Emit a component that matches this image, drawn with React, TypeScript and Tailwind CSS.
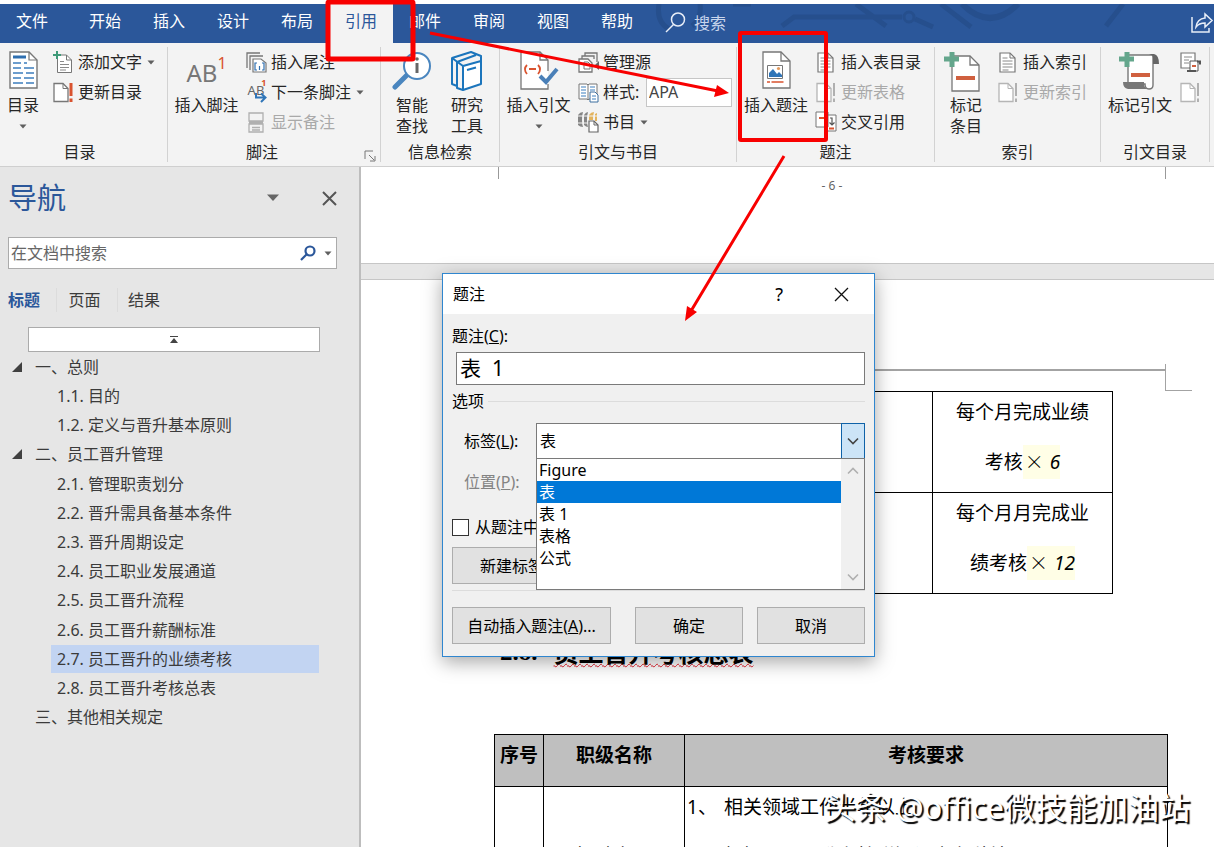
import React, { ReactNode } from "react";

const TABS = ["开始", "插入", "设计", "布局", "引用", "邮件", "审阅", "视图", "帮助"];

const Caret = ({ className = "" }: { className?: string }) => (
  <svg width="8" height="5" viewBox="0 0 8 5" className={className} aria-hidden="true">
    <path d="M0.5 0.5h7L4 4.5z" fill="#5f5f5f" />
  </svg>
);

/* ---------- ribbon icons ---------- */

const TocIcon = () => (
  <svg width="29" height="38" viewBox="0 0 29 38">
    <path d="M1 1h19l8 8v28H1z" fill="#fff" stroke="#777" strokeWidth="1.4" />
    <path d="M20 1v8h8" fill="none" stroke="#777" strokeWidth="1.2" />
    <path d="M4 6h13" stroke="#2f6fb0" strokeWidth="3" />
    <path d="M4 12h8M15 12h3M4 17h8M15 17h10M4 22h10M17 22h8M4 27h8M15 27h10M4 32h10M17 32h8" stroke="#3d7ebd" strokeWidth="1.6" />
  </svg>
);

const AddTextIcon = () => (
  <svg width="20" height="22" viewBox="0 0 20 22">
    <path d="M4.500 4h9l5 5v12.500h-14z" fill="#fff" stroke="#777" />
    <path d="M13.500 4v5h5" fill="none" stroke="#777" />
    <path d="M7 10.500h4M7 13.500h9M7 16.500h9M7 19h6" stroke="#8a8a8a" />
    <path d="M4 0v8M0 4h8" stroke="#3f9a78" strokeWidth="2" />
  </svg>
);

const UpdateIcon = ({ muted = false }: { muted?: boolean }) => (
  <svg width="21" height="21" viewBox="0 0 21 21">
    <path d="M1 1.500h9l5 5v13H1z" fill="#fff" stroke={muted ? "#b5b5b5" : "#777"} strokeWidth="1.3" />
    <path d="M10 1.500v5h5" fill="none" stroke={muted ? "#b5b5b5" : "#777"} />
    <path d="M18 1v13M18 16.500v3.500" stroke={muted ? "#b0b0b0" : "#d9532f"} strokeWidth={muted ? 2 : 3} />
  </svg>
);

const EndnoteIcon = () => (
  <svg width="21" height="21" viewBox="0 0 21 21">
    <path d="M1 16V1h13M4 18V4h13" fill="none" stroke="#777" strokeWidth="1.300" />
    <path d="M7 20V7h8l5 4v9z" fill="#fff" stroke="#777" strokeWidth="1.200" />
    <path d="M11 11H9v7h2M16 11h2v7h-2M13.500 14v4" fill="none" stroke="#2f6fb0" strokeWidth="1.200" />
  </svg>
);

const NextNoteIcon = () => (
  <span className="relative block h-[22px] w-[21px] text-[13px] leading-[18px] text-[#666]">
    AB
    <span className="absolute -top-1 right-0 text-[9px] leading-[12px] font-bold text-[#d9532f]">1</span>
    <svg width="12" height="11" viewBox="0 0 12 11" className="absolute right-0 bottom-0">
      <path d="M1 1v4.500h8M6 1.500l4.500 4L6 10" fill="none" stroke="#2f75b8" strokeWidth="2" />
    </svg>
  </span>
);

const ShowNotesIcon = () => (
  <svg width="21" height="21" viewBox="0 0 21 21">
    <path d="M3 9V1h14v8zM3 12h14v8H3zM6 15.500h8M6 18h8M3 10.500h14" fill="none" stroke="#b0b0b0" strokeWidth="1.300" />
  </svg>
);

const SmartLookupIcon = () => (
  <svg width="40" height="40" viewBox="0 0 40 40">
    <path d="M15 24L3 36" stroke="#4a86bf" strokeWidth="5" strokeLinecap="round" />
    <circle cx="25" cy="15" r="13" fill="#fff" stroke="#4a86bf" strokeWidth="2" />
    <path d="M25 12v10" stroke="#666" strokeWidth="3" />
    <circle cx="25" cy="8" r="1.800" fill="#666" />
  </svg>
);

const ResearchIcon = () => (
  <svg width="32" height="40" viewBox="0 0 32 40" fill="none" stroke="#1b75bc" strokeWidth="2" strokeLinejoin="round">
    <path d="M12 15l18-5v23l-18 6z" fill="#fff" />
    <path d="M12 15L1 7v26l5 2M1 7l19-6 10 4v5M12 39l-6-2V11l19-7" />
    <path d="M16 19l9-2.500" />
  </svg>
);

const CitationIcon = () => (
  <svg width="40" height="40" viewBox="0 0 40 40">
    <path d="M29 20V9l-8-8H2v37h27v-5" fill="#fff" stroke="#777" strokeWidth="1.300" />
    <path d="M21 1v8h8" fill="none" stroke="#777" strokeWidth="1.300" />
    <path d="M8 14c-2.500 2.500-2.500 6 0 9M19 14c2.500 2.500 2.500 6 0 9M10 18h7" fill="none" stroke="#d9532f" strokeWidth="1.800" />
    <path d="M21 25l6 6 11-13" fill="none" stroke="#4a80b8" strokeWidth="4" />
  </svg>
);

const ManageSourcesIcon = () => (
  <svg width="21" height="21" viewBox="0 0 21 21">
    <path d="M7 4V1h12v9M4 7V4h12v3" fill="none" stroke="#777" strokeWidth="1.300" />
    <path d="M1 7h9l4 4v9H1z" fill="#fff" stroke="#777" strokeWidth="1.300" />
    <path d="M6 10h4l2 2v5H6z" fill="#fff" stroke="#777" />
    <path d="M21 9v9l-5-4z" fill="#666" />
  </svg>
);

const StyleIcon = () => (
  <svg width="21" height="21" viewBox="0 0 21 21">
    <path d="M1 2h8l1 1 1-1h8v15h-8l-1 1-1-1H1zM10 3v14" fill="#fff" stroke="#777" />
    <path d="M3 5h5M3 8h5M3 11h5M3 14h5M12 5h5M12 8h5" stroke="#3d7ebd" strokeWidth="1.200" />
    <path d="M12 10h5l3 3v7h-8z" fill="#fff" stroke="#3d6f9f" />
    <path d="M14 14h4M14 17h4" stroke="#3d7ebd" />
  </svg>
);

const BibliographyIcon = () => (
  <svg width="22" height="22" viewBox="0 0 22 22">
    <path d="M1 4q2-3 5-3-1 3-1 8t1 7q-3 0-5-2zM7 4q2-3 4-3-1 3-1 8t1 7q-2 0-4-2z" fill="#858585" />
    <path d="M12 4q2-3 5-3-1 3-1 8h-4z" fill="#e3b35d" />
    <path d="M18 3l2-1v8h-2z" fill="#e3b35d" />
    <path d="M0 5h20M0 12h11" stroke="#f3f3f3" />
    <path d="M12 10h5l4 4v7h-9z" fill="#fff" stroke="#666" strokeWidth="1.200" />
    <path d="M17 10v4h4" fill="none" stroke="#666" />
  </svg>
);

const CaptionIcon = () => (
  <svg width="29" height="38" viewBox="0 0 29 38">
    <path d="M1 1h18l9 9v27H1z" fill="#fff" stroke="#777" strokeWidth="1.300" />
    <path d="M19 1v9h9" fill="none" stroke="#777" strokeWidth="1.300" />
    <path d="M5.500 14.500h15v13h-15z" fill="#fff" stroke="#777" />
    <path d="M7 26v-4l4-4 4 5 2-2 3 3v2z" fill="#2f75b8" />
    <circle cx="16.500" cy="17.500" r="1.600" fill="#e39a5d" />
    <path d="M5 31h3M9.500 31h12" stroke="#d9532f" strokeWidth="1.600" />
  </svg>
);

const ListPageIcon = () => (
  <svg width="20" height="21" viewBox="0 0 20 21">
    <path d="M2 1h10l5 5v14H2z" fill="#fff" stroke="#777" strokeWidth="1.200" />
    <path d="M12 1v5h5" fill="none" stroke="#777" />
    <path d="M4.500 6h5M4.500 9h10M4.500 12h10M4.500 15h10M4.500 18h6" stroke="#8a8a8a" />
  </svg>
);

const CrossRefIcon = () => (
  <svg width="22" height="22" viewBox="0 0 22 22">
    <path d="M1 1h12v15H1zM12 4h9v16h-9z" fill="#fff" stroke="#777" />
    <path d="M4 7h8M14 17.500h5" stroke="#d9532f" strokeWidth="2" />
    <path d="M15 7h2v7M14.500 11.500l2.500 2.500 2.500-2.500" fill="none" stroke="#555" strokeWidth="1.200" />
  </svg>
);

const MarkEntryIcon = () => (
  <svg width="44" height="42" viewBox="0 0 44 42">
    <path d="M8 5h18l9 9v26H8z" fill="#fff" stroke="#777" strokeWidth="1.300" />
    <path d="M26 5v9h9" fill="none" stroke="#777" strokeWidth="1.300" />
    <path d="M12 27h19" stroke="#d0603f" strokeWidth="4" />
    <path d="M8 1v15M0 8h15" stroke="#64a68c" strokeWidth="5" />
  </svg>
);

const MarkCitationIcon = () => (
  <svg width="42" height="42" viewBox="0 0 42 42">
    <path d="M9 4h25v30q0 4-4 4t-4-5H9z" fill="#fff" stroke="#777" strokeWidth="1.400" />
    <path d="M30 3h5q5 1 5 10h-6V7q0-3-4-4z" fill="#666" />
    <path d="M4 31h21v3q1 4 5 4H9q-5-1-5-7z" fill="#777" />
    <path d="M12 24h19" stroke="#d0603f" strokeWidth="4" />
    <path d="M8 1v15M0 8h15" stroke="#64a68c" strokeWidth="5" />
  </svg>
);

const AuthoritiesIcon = () => (
  <svg width="21" height="21" viewBox="0 0 21 21">
    <path d="M1 1h14v15H1z" fill="#fff" stroke="#777" strokeWidth="1.200" />
    <path d="M4 5h8M4 8h5M4 11h5" stroke="#8a8a8a" />
    <path d="M10 9h8v10h-8z" fill="#fff" stroke="#555" />
    <path d="M7 19h9M17 9.500h3v3" fill="none" stroke="#555" strokeWidth="2" />
    <path d="M12 14h4" stroke="#d0603f" strokeWidth="2" />
  </svg>
);

/* ---------- ribbon building blocks ---------- */

function BigButton({ icon, lines, caret, width }: { icon: ReactNode; lines: string[]; caret?: boolean; width: string }) {
  return (
    <button className={`flex shrink-0 flex-col items-center pt-1 ${width}`}>
      <span className="flex h-11 items-start justify-center">{icon}</span>
      {lines.map((l) => (
        <span key={l} className="h-[21px] leading-[21px] whitespace-nowrap">
          {l}
        </span>
      ))}
      {caret && <Caret className="mt-2" />}
    </button>
  );
}

function SmallButton({ icon, text, caret, muted }: { icon: ReactNode; text?: string; caret?: boolean; muted?: boolean }) {
  return (
    <button
      aria-label={text ?? "引文目录选项"}
      className={`flex h-[30px] items-center gap-1 whitespace-nowrap ${muted ? "text-[#a9a9a9]" : ""}`}
    >
      <span className="flex w-[22px] shrink-0 justify-center">{icon}</span>
      {text}
      {caret && <Caret className="ml-px" />}
    </button>
  );
}

function Group({
  label,
  width,
  children,
  launcher,
  labelPadding = "",
}: {
  label: string;
  width: string;
  children: ReactNode;
  launcher?: boolean;
  labelPadding?: string;
}) {
  return (
    <section className={`relative my-1 flex shrink-0 flex-col border-r border-[#d2d2d2] ${width}`}>
      <div className="flex min-h-0 flex-1 items-start">{children}</div>
      <div className={`h-5 text-center leading-5 ${labelPadding}`}>{label}</div>
      {launcher && (
        <button aria-label={`${label}选项`} className="absolute right-1 bottom-0">
          <svg width="12" height="12" viewBox="0 0 12 12" fill="none" stroke="#777">
            <path d="M1 9V1h8M5 5l5 5M11 6v5H6" />
          </svg>
        </button>
      )}
    </section>
  );
}

const Ribbon = () => (
  <div className="flex h-[124px] shrink-0 overflow-hidden border-b border-[#cfcfcf] bg-[#f3f3f3] text-[#262626]">
    <Group label="目录" width="w-[168px]" labelPadding="pr-2">
      <BigButton width="w-[46px]" icon={<TocIcon />} lines={["目录"]} caret />
      <div className="ml-[6px] flex flex-col">
        <SmallButton icon={<AddTextIcon />} text="添加文字" caret />
        <SmallButton icon={<UpdateIcon />} text="更新目录" />
      </div>
    </Group>
    <Group label="脚注" width="w-[213px]" launcher labelPadding="pr-6">
      <BigButton
        width="w-[77px]"
        icon={
          <span className="flex pt-1 text-2xl leading-9 text-[#777]">
            AB<span className="text-base leading-4 text-[#d9532f]">1</span>
          </span>
        }
        lines={["插入脚注"]}
      />
      <div className="flex flex-col">
        <SmallButton icon={<EndnoteIcon />} text="插入尾注" />
        <SmallButton icon={<NextNoteIcon />} text="下一条脚注" caret />
        <SmallButton icon={<ShowNotesIcon />} text="显示备注" muted />
      </div>
    </Group>
    <Group label="信息检索" width="w-[119px]">
      <BigButton width="w-[62px]" icon={<SmartLookupIcon />} lines={["智能", "查找"]} />
      <BigButton width="w-12" icon={<ResearchIcon />} lines={["研究", "工具"]} />
    </Group>
    <Group label="引文与书目" width="w-[237px]">
      <BigButton width="w-[77px]" icon={<CitationIcon />} lines={["插入引文"]} caret />
      <div className="flex flex-col">
        <SmallButton icon={<ManageSourcesIcon />} text="管理源" />
        <div className="flex h-[30px] items-center gap-1">
          <span className="flex w-[22px] justify-center">
            <StyleIcon />
          </span>
          <label htmlFor="citation-style" className="w-[39px]">
            样式:
          </label>
          <select
            id="citation-style"
            className="h-[29px] w-[86px] appearance-none border border-[#c6c6c6] bg-white px-[2px] text-[#444]"
          >
            <option>APA</option>
          </select>
        </div>
        <SmallButton icon={<BibliographyIcon />} text="书目" caret />
      </div>
    </Group>
    <Group label="题注" width="w-[198px]">
      <BigButton width="w-[78px]" icon={<CaptionIcon />} lines={["插入题注"]} />
      <div className="flex flex-col">
        <SmallButton icon={<ListPageIcon />} text="插入表目录" />
        <SmallButton icon={<UpdateIcon muted />} text="更新表格" muted />
        <SmallButton icon={<CrossRefIcon />} text="交叉引用" />
      </div>
    </Group>
    <Group label="索引" width="w-[166px]">
      <BigButton width="w-[62px]" icon={<MarkEntryIcon />} lines={["标记", "条目"]} />
      <div className="flex flex-col">
        <SmallButton icon={<ListPageIcon />} text="插入索引" />
        <SmallButton icon={<UpdateIcon muted />} text="更新索引" muted />
      </div>
    </Group>
    <Group label="引文目录" width="w-[109px]">
      <BigButton width="w-[78px]" icon={<MarkCitationIcon />} lines={["标记引文"]} />
      <div className="flex flex-col">
        <SmallButton icon={<AuthoritiesIcon />} />
        <SmallButton icon={<UpdateIcon muted />} />
      </div>
    </Group>
  </div>
);

const TitleBar = () => (
  <header className="relative flex h-[39px] shrink-0 items-stretch bg-[#2b579a] text-white">
    <svg className="absolute top-0 right-0" width="574" height="39" viewBox="0 0 574 39" fill="none" stroke="#264f8d" strokeWidth="5" aria-hidden="true">
      <path d="M19 0q-3 18 10 25M60 0q2 14-8 22" />
      <path d="M93 0h18" />
      <path d="M142 22l12-9h108M216 0l30 22M275 15l18 8M301 0l30 23" />
      <circle cx="269" cy="13" r="5" strokeWidth="3" />
      <path d="M322 0q28 28 56 0" strokeWidth="6" />
      <path d="M483 0l-17 22" />
    </svg>
    <nav className="relative flex">
      <button className="mr-[9px] w-16 pb-[5px]">文件</button>
      {TABS.map((t) => (
        <button key={t} className={`w-16 pb-[5px] ${t === "引用" ? "bg-[#f3f3f3] text-[#2b579a]" : ""}`}>
          {t}
        </button>
      ))}
    </nav>
    <label className="relative ml-4 flex flex-1 items-center gap-2 pb-[2px]">
      <svg width="21" height="21" viewBox="0 0 21 21" fill="none" stroke="#e8eef8" strokeWidth="1.500">
        <circle cx="13" cy="7.500" r="6.500" />
        <path d="M8.500 12.500L1 20" />
      </svg>
      <input placeholder="搜索" className="w-40 bg-transparent placeholder-[#c9d6ec] outline-none" />
    </label>
    <button aria-label="共享" className="relative pb-[2px]">
      <svg width="23" height="22" viewBox="0 0 23 22" fill="none" stroke="#e8eef8" strokeWidth="1.500">
        <path d="M1 5v15h17v-4M5 15q1-8 9-9V2l7 6.500-7 6.500v-4q-6 0-9 4z" />
      </svg>
    </button>
  </header>
);

/* ---------- navigation pane ---------- */

const OUTLINE: { text: string; level: number; open?: boolean; current?: boolean }[] = [
  { text: "一、总则", level: 1, open: true },
  { text: "1.1. 目的", level: 2 },
  { text: "1.2. 定义与晋升基本原则", level: 2 },
  { text: "二、员工晋升管理", level: 1, open: true },
  { text: "2.1. 管理职责划分", level: 2 },
  { text: "2.2. 晋升需具备基本条件", level: 2 },
  { text: "2.3. 晋升周期设定", level: 2 },
  { text: "2.4. 员工职业发展通道", level: 2 },
  { text: "2.5. 员工晋升流程", level: 2 },
  { text: "2.6. 员工晋升薪酬标准", level: 2 },
  { text: "2.7. 员工晋升的业绩考核", level: 2, current: true },
  { text: "2.8. 员工晋升考核总表", level: 2 },
  { text: "三、其他相关规定", level: 1 },
];

const NavigationPane = () => (
  <aside className="w-[361px] shrink-0 border-r-2 border-[#bdbdbd] bg-[#e6e6e6] text-[#3b3b3b]">
    <div className="mb-2 flex h-[62px] items-center pr-[22px] pl-2">
      <h2 className="flex-1 text-[29px] leading-10 text-[#2b579a]">导航</h2>
      <button aria-label="窗格选项" className="mr-[42px]">
        <svg width="14" height="8" viewBox="0 0 14 8">
          <path d="M1 0.500h12L7 7z" fill="#666" />
        </svg>
      </button>
      <button aria-label="关闭">
        <svg width="15" height="15" viewBox="0 0 15 15" stroke="#555" strokeWidth="2">
          <path d="M1 1l13 13M14 1L1 14" />
        </svg>
      </button>
    </div>
    <div className="mr-[22px] ml-2 flex h-8 items-center border border-[#ababab] bg-white pr-1">
      <input aria-label="在文档中搜索" placeholder="在文档中搜索" className="h-full min-w-0 flex-1 pl-[2px] placeholder-[#666] outline-none" />
      <svg width="16" height="16" viewBox="0 0 16 16" fill="none" stroke="#2b579a" strokeWidth="2.200" className="mr-2">
        <circle cx="10" cy="6" r="4.500" />
        <path d="M6.500 9.500L1 15" />
      </svg>
      <Caret />
    </div>
    <div className="mt-[19px] flex h-6 pl-2 leading-6">
      <button className="w-[49px] border-r border-[#dcdcdc] pr-4 font-bold whitespace-nowrap text-[#2b579a]">标题</button>
      <button className="ml-[11px] w-[50px] border-r border-[#dcdcdc] pr-4 whitespace-nowrap">页面</button>
      <button className="ml-[10px] whitespace-nowrap">结果</button>
    </div>
    <button aria-label="跳转到文档开头" className="mt-[15px] ml-7 flex h-[25px] w-[292px] items-center justify-center border border-[#ababab] bg-white">
      <svg width="8" height="7" viewBox="0 0 8 7" fill="#444">
        <path d="M0 0h8v1H0zM4 2l4 5H0z" />
      </svg>
    </button>
    <ul className="grid h-[380px] auto-rows-fr">
      {OUTLINE.map((o) => (
        <li key={o.text} className="flex items-center">
          <span className="flex w-[34px] shrink-0 justify-center">
            {o.open && (
              <svg width="10" height="10" viewBox="0 0 10 10">
                <path d="M10 0v10H0z" fill="#404040" />
              </svg>
            )}
          </span>
          <button
            className={`h-7 text-left whitespace-nowrap ${o.level === 2 ? "ml-[17px] w-[268px] pl-[6px]" : "pl-px"} ${
              o.current ? "bg-[#c2d4f2]" : ""
            }`}
          >
            {o.text}
          </button>
        </li>
      ))}
    </ul>
  </aside>
);

/* ---------- document ---------- */

const Line = ({ children }: { children?: ReactNode }) => <span className="block h-[49px] leading-10 whitespace-nowrap">{children}</span>;

const Times = ({ n }: { n: string }) => (
  <span className="bg-[#fffee6] py-1">
    <span className="pl-[2px] font-['Noto_Sans_CJK_SC',sans-serif] font-light">×</span>
    <i className="pl-[6px]">{n}</i>
  </span>
);

const DocumentView = () => (
  <main className="flex min-w-0 flex-1 flex-col overflow-hidden bg-[#e6e6e6] text-black">
    <div className="flex h-24 shrink-0 justify-between bg-white pl-[137px] text-[#666]">
      <span className="h-3 w-px bg-[#999]" />
      <span className="pt-[10px] text-xs leading-[18px]">- 6 -</span>
      <span className="mr-12 h-3 w-px bg-[#999]" />
    </div>
    <div className="h-[17px] shrink-0 border-y border-[#c6c6c6]" />
    <div className="flex-1 bg-white pt-[84px] text-[19px]">
      <div className="ml-[137px] flex">
        <div className="h-[7px] w-[667px] border-b-2 border-[#a3a3a3]" />
        <div className="h-[27px] w-[27px] border-b border-l border-[#a3a3a3]" />
      </div>
      <table className="ml-[133px] w-[619px] table-fixed border-collapse">
        <tbody>
          {[
            ["每个月完成业绩", "考核", "6"],
            ["每个月月完成业", "绩考核", "12"],
          ].map(([first, second, n]) => (
            <tr key={n} className="h-[101px]">
              <td className="border border-black" />
              <td className="w-[180px] border border-black p-0 text-center align-top">
                <Line>{first}</Line>
                <Line>
                  {second}
                  <Times n={n} />
                </Line>
              </td>
            </tr>
          ))}
        </tbody>
      </table>
      <h3 className="mt-[38px] ml-[139px] flex h-10 items-center gap-4 text-[25px] leading-8 font-bold">
        <span className="font-['Liberation_Serif',serif]">2.8.</span>
        <span className="underline decoration-[#e0202c] decoration-wavy decoration-1 underline-offset-1">员工晋升考核总表</span>
      </h3>
      <table className="mt-[62px] ml-[133px] w-[674px] table-fixed border-collapse">
        <thead>
          <tr className="h-[52px] bg-[#bfbfbf] align-top">
            <th className="w-[49px] border border-black p-0 leading-10 whitespace-nowrap">序号</th>
            <th className="w-[141px] border border-black p-0 leading-10">职级名称</th>
            <th className="border border-black p-0 leading-10">考核要求</th>
          </tr>
        </thead>
        <tbody>
          <tr className="align-top">
            <td className="border border-black" />
            <td className="border border-black p-0 text-center">
              <Line />
              <Line>招聘专员</Line>
            </td>
            <td className="border border-black p-0">
              <ol>
                {["相关领域工作半年以上", "根据员工晋升考核联源设立各种情况"].map((t, i) => (
                  <li key={t} className="flex pl-[2px]">
                    <span className="w-[37px]">
                      <Line>{i + 1}、</Line>
                    </span>
                    <Line>{t}</Line>
                  </li>
                ))}
              </ol>
            </td>
          </tr>
        </tbody>
      </table>
    </div>
  </main>
);

/* ---------- caption dialog ---------- */

const LABELS = ["Figure", "表", "表 1", "表格", "公式"];
const Chevron = ({ up = false, color }: { up?: boolean; color: string }) => (
  <svg width="12" height="8" viewBox="0 0 12 8" fill="none" stroke={color} strokeWidth="1.600" aria-hidden="true">
    <path d={up ? "M1 6.500l5-5 5 5" : "M1 1.500l5 5 5-5"} />
  </svg>
);

const DIALOG_BUTTON = "h-[37px] border border-[#adadad] bg-[#e1e1e1] whitespace-nowrap";

const CaptionDialog = () => (
  <div
    role="dialog"
    aria-label="题注"
    className="absolute top-[273px] left-[442px] w-[433px] border border-[#2f86cf] bg-[#f0f0f0] pb-3 text-black shadow-[0_5px_18px_rgba(0,0,0,0.35)]"
  >
    <div className="flex h-10 items-center bg-white pr-[25px] pl-[10px]">
      <span className="flex-1">题注</span>
      <button aria-label="帮助" className="mr-[51px] text-lg">
        ?
      </button>
      <button aria-label="关闭">
        <svg width="15" height="15" viewBox="0 0 15 15" stroke="#111" strokeWidth="1.300">
          <path d="M1 1l13 13M14 1L1 14" />
        </svg>
      </button>
    </div>
    <div className="px-[9px]">
      <label htmlFor="caption" className="mt-[10px] block h-6 leading-6">
        题注(<u>C</u>):
      </label>
      <div className="flex pt-1 pl-1">
        <input
          id="caption"
          defaultValue="表  1"
          className="h-[33px] min-w-0 flex-1 border border-[#7a7a7a] bg-white px-[3px] pb-1 text-[21px] outline-none"
        />
      </div>
      <div className="mt-1 flex h-6 items-center gap-1">
        选项<span className="h-px flex-1 bg-[#dcdcdc]" />
      </div>
      <div className="mt-[10px] flex h-9 items-center pl-3">
        <label htmlFor="label" className="w-[72px]">
          标签(<u>L</u>):
        </label>
        <div className="relative flex h-9 flex-1 border border-[#7a7a7a] bg-white">
          <select id="label" defaultValue="表" className="min-w-0 flex-1 appearance-none bg-white pl-[3px] outline-none">
            {LABELS.map((l) => (
              <option key={l}>{l}</option>
            ))}
          </select>
          <span className="-my-px -mr-px flex w-6 items-center justify-center border border-[#0f62a8] bg-[#cce4f7]">
            <Chevron color="#444" />
          </span>
          <div className="absolute top-[34px] -right-px -left-px flex h-[132px] border border-[#7a7a7a] bg-white">
            <ul role="listbox" aria-label="标签" className="flex-1">
              {LABELS.map((l) => (
                <li
                  key={l}
                  role="option"
                  aria-selected={l === "表"}
                  className={`h-[22px] pl-[2px] leading-[22px] ${l === "表" ? "bg-[#0078d7] text-white" : ""}`}
                >
                  {l}
                </li>
              ))}
            </ul>
            <div className="flex w-[23px] flex-col items-center justify-between bg-[#f0f0f0] py-2">
              <Chevron up color="#b0b0b0" />
              <Chevron color="#b0b0b0" />
            </div>
          </div>
        </div>
      </div>
      <div className="mt-[11px] flex h-6 items-center pl-3 text-[#838383]">
        位置(<u>P</u>):
      </div>
      <label className="mt-[21px] flex h-6 items-center gap-[6px] whitespace-nowrap">
        <input type="checkbox" className="size-[17px] appearance-none border border-[#333] bg-white" />
        从题注中排除标签
      </label>
      <button className={`${DIALOG_BUTTON} mt-2 w-[133px]`}>新建标签...</button>
      <div className="mt-[6px] h-px bg-[#dcdcdc]" />
      <div className="mt-4 flex">
        <button className={`${DIALOG_BUTTON} w-[159px]`}>
          自动插入题注(<u>A</u>)...
        </button>
        <button className={`${DIALOG_BUTTON} ml-6 w-[108px]`}>确定</button>
        <button className={`${DIALOG_BUTTON} ml-[14px] w-[108px]`}>取消</button>
      </div>
    </div>
  </div>
);

/* Tutorial mark-up drawn over the window */
const Annotations = () => (
  <svg className="pointer-events-none absolute top-0 left-0" width="900" height="340" viewBox="0 0 900 340" fill="none" stroke="#f80000" aria-hidden="true">
    <rect x="328" y="2" width="85" height="57" strokeWidth="5" rx="1" />
    <rect x="740" y="33" width="86" height="107" strokeWidth="4" rx="1" />
    <path d="M430 33L718 91M784 156L691 311" strokeWidth="3" />
    <path d="M729 93l-15 4 3-12zM685 321l2-15 10 6z" fill="#f80000" stroke="none" />
  </svg>
);

export default function App() {
  return (
    <div className="relative flex h-screen flex-col overflow-hidden bg-white pt-1 font-['Noto_Sans','Noto_Sans_CJK_SC',sans-serif] text-base">
      <TitleBar />
      <Ribbon />
      <div className="flex min-h-0 flex-1">
        <NavigationPane />
        <DocumentView />
      </div>
      <CaptionDialog />
      <Annotations />
      <div className="pointer-events-none absolute right-6 bottom-5 text-[31px] leading-10 whitespace-nowrap text-white [text-shadow:2px_2px_1px_#000]">
        <span className="mr-2 text-[32px]">头条</span>@office微技能加油站
      </div>
    </div>
  );
}
